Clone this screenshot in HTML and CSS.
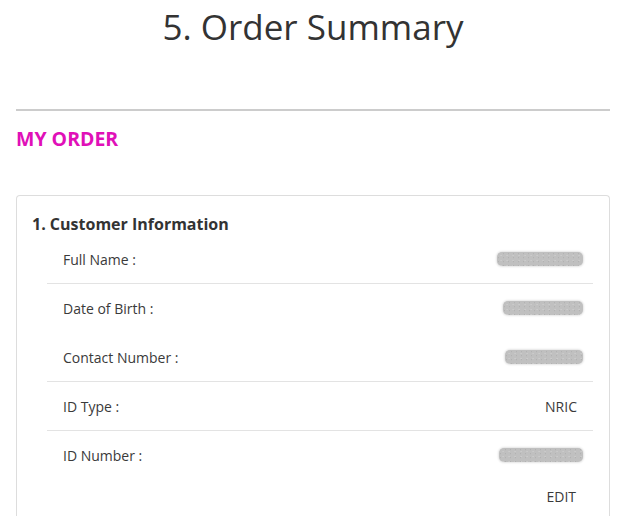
FILE: index.html
```html
<!DOCTYPE html>
<html>
<head>
<meta charset="utf-8">
<link rel="stylesheet" href="styles.css">
</head>
<body>
<div class="page">
  <h1 class="title">5. Order Summary</h1>
  <hr class="divider">
  <h2 class="section">MY ORDER</h2>
  <div class="card">
    <h3 class="card-title">1. Customer Information</h3>
    <div class="rows">
      <div class="row line"><span class="label">Full Name :</span><span class="blur w86"></span></div>
      <div class="row"><span class="label">Date of Birth :</span><span class="blur w80"></span></div>
      <div class="row line"><span class="label">Contact Number :</span><span class="blur w78"></span></div>
      <div class="row line"><span class="label">ID Type :</span><span class="value">NRIC</span></div>
      <div class="row"><span class="label">ID Number :</span><span class="blur w84"></span></div>
      <div class="edit-row"><span class="edit">EDIT</span></div>
    </div>
  </div>
</div>
</body>
</html>
```
FILE: styles.css
```css
html, body {
  margin: 0;
  padding: 0;
  background: #fff;
}
body {
  font-family: "Open Sans", "Noto Sans", sans-serif;
  color: #333;
}
.page {
  padding: 0 14px 0 16px;
}
.title {
  margin: 0;
  padding-top: 5px;
  font-size: 35px;
  font-weight: 400;
  line-height: 44px;
  text-align: center;
  color: #333;
}
.divider {
  margin: 60px 0 0;
  border: 0;
  border-top: 2px solid #ccc;
}
.section {
  margin: 15px 0 0;
  font-size: 19.5px;
  line-height: 26px;
  font-weight: 700;
  color: #e010b8;
}
.card {
  margin-top: 43px;
  border: 1px solid #ddd;
  border-bottom: 0;
  border-radius: 4px 4px 0 0;
  padding: 16px 16px 0 15px;
  height: 320px;
}
.card-title {
  margin: 0;
  font-size: 16px;
  line-height: 24px;
  font-weight: 700;
  color: #333;
}
.rows {
  margin-left: 15px;
  margin-top: -1px;
}
.row {
  display: flex;
  align-items: center;
  justify-content: space-between;
  height: 48px;
  padding: 0 16px;
  font-size: 14px;
  border-bottom: 1px solid transparent;
}
.row.line {
  border-bottom-color: #e3e3e3;
}
.label {
  color: #3a3a3a;
}
.value {
  color: #3a3a3a;
}
.blur {
  display: block;
  height: 14px;
  border-radius: 5px;
  background-color: #c0c0c0;
  background-image:
    radial-gradient(circle at 30% 40%, #b2b2b2 0 0.6px, transparent 1px),
    radial-gradient(circle at 70% 70%, #cbcbcb 0 0.6px, transparent 1px);
  background-size: 5px 4px, 6px 5px;
  box-shadow: 0 0 2px 1px #e4e4e4;
  margin-right: -6px;
}
.w86 { width: 86px; }
.w80 { width: 80px; }
.w78 { width: 78px; }
.w84 { width: 84px; }
.edit-row {
  display: flex;
  justify-content: flex-end;
  padding: 7px 17px 0 0;
  font-size: 14px;
}
.edit {
  color: #3a3a3a;
}
```
